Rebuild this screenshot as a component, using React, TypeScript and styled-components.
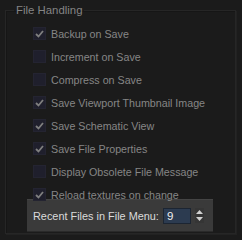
import styled, { createGlobalStyle } from "styled-components"

const Global = createGlobalStyle`
    html, body{
        margin: 0;
        background: #1b1b1b;
        width: 242px;
        height: 240px;
        overflow: hidden;
    }
`

const Group = styled.fieldset`
    margin: 3px 0 0 5px;
    padding: 0 21px 0 21px;
    width: 231px;
    min-width: 0;
    height: 231px;
    box-sizing: border-box;
    border: 1px solid #262626;
    box-shadow: inset 1px 1px 0 #161616, 1px 1px 0 #222222;
    font-family: "Liberation Sans", Arial, sans-serif;
    font-size: 10.7px;
`

const Title = styled.legend`
    margin-left: -13px;
    padding: 0 2px;
    color: #858585;
    line-height: 14px;
    font-size: 11.4px;
`

const List = styled.div`
    display: flex;
    flex-direction: column;
    margin-top: 5px;
    padding-left: 6px;
`

const Row = styled.label`
    display: flex;
    align-items: center;
    gap: 5px;
    height: 23px;
    color: #868686;
    white-space: nowrap;
`

const Box = styled.span`
    width: 13px;
    height: 13px;
    box-sizing: border-box;
    background: #1f1f2c;
    border: 1px solid #242431;
    display: flex;
    align-items: center;
    justify-content: center;
`

const Panel = styled.div`
    margin-top: -7px;
    width: 186px;
    height: 33px;
    box-sizing: border-box;
    background: #3a3a3a;
    border-top: 1px solid #444444;
    border-bottom: 1px solid #2a2a2a;
    display: flex;
    align-items: center;
    padding: 0 9px 0 6px;
    color: #dadada;
    white-space: nowrap;
    font-size: 10.9px;
`

const PanelLabel = styled.span`
    flex: 1;
`

const Field = styled.span`
    width: 28px;
    height: 16px;
    box-sizing: border-box;
    background: #2c3b50;
    border: 1px solid #1c2532;
    color: #f0f0f0;
    padding-left: 3px;
    line-height: 14px;
    font-size: 11.5px;
`

const Spin = styled.span`
    margin-left: 4px;
    width: 9px;
    height: 15px;
    display: flex;
    flex-direction: column;
    justify-content: space-around;
    align-items: center;
    background: #353535;
`

const items: [string, boolean][] = [
    ["Backup on Save", true],
    ["Increment on Save", false],
    ["Compress on Save", false],
    ["Save Viewport Thumbnail Image", true],
    ["Save Schematic View", true],
    ["Save File Properties", true],
    ["Display Obsolete File Message", false],
    ["Reload textures on change", true],
]

function Check(){
    return(
        <svg width="9" height="8" viewBox="0 0 9 8">
            <path d="M1 4 L3.5 6.5 L8 1" fill="none" stroke="#7f7f7f" strokeWidth="1.8" />
        </svg>
    )
}

export default function App(){
    return(
        <>
            <Global />
            <Group>
                <Title>File Handling</Title>
                <List>
                    {items.map(([label, on]) => (
                        <Row key={label}>
                            <Box>{on && <Check />}</Box>
                            {label}
                        </Row>
                    ))}
                </List>
                <Panel>
                    <PanelLabel>Recent Files in File Menu:</PanelLabel>
                    <Field>9</Field>
                    <Spin>
                        <svg width="7" height="4" viewBox="0 0 7 4"><path d="M0 4 L3.5 0 L7 4Z" fill="#d0d0d0" /></svg>
                        <svg width="7" height="4" viewBox="0 0 7 4"><path d="M0 0 L3.5 4 L7 0Z" fill="#d0d0d0" /></svg>
                    </Spin>
                </Panel>
            </Group>
        </>
    )
}
